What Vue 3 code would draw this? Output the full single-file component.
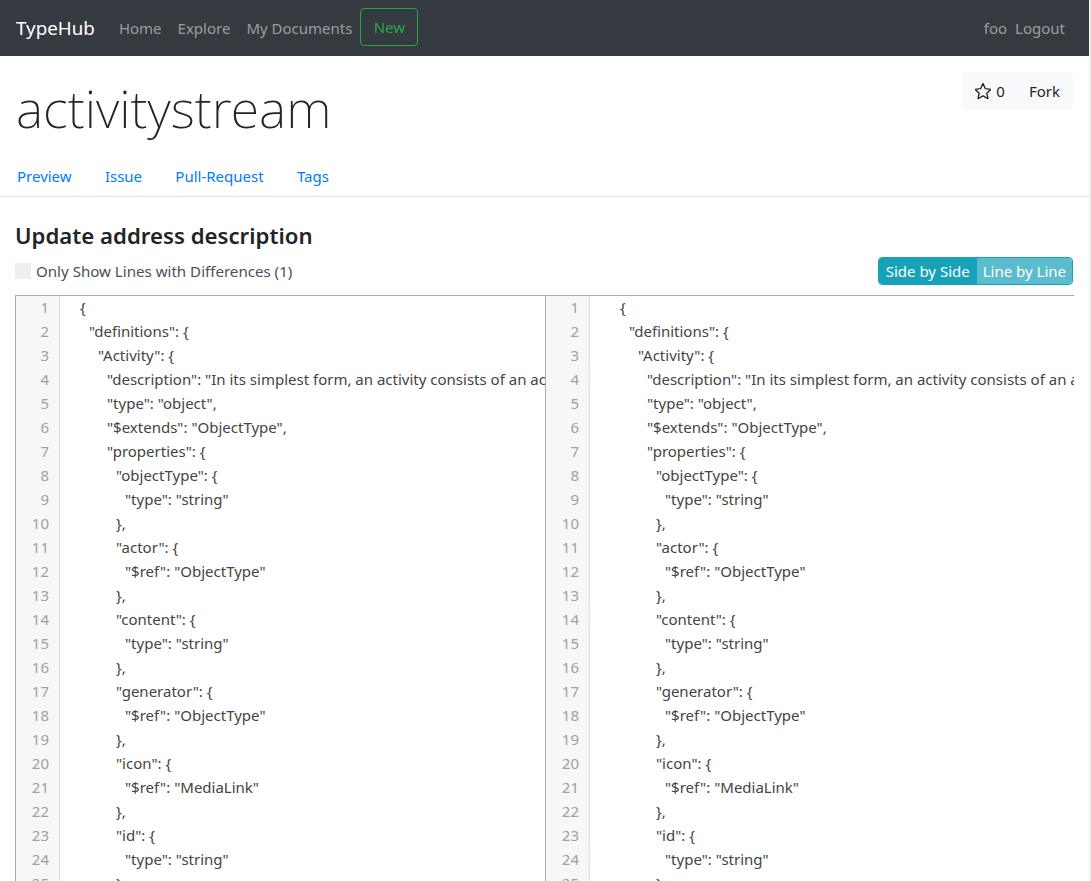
<template>
  <div class="page">
    <nav class="navbar">
      <a class="brand">TypeHub</a>
      <div class="nav-links">
        <a v-for="item in navItems" :key="item" class="nav-link">{{ item }}</a>
      </div>
      <button class="btn-new">New</button>
      <div class="nav-user">
        <a class="nav-link">foo</a>
        <a class="nav-link">Logout</a>
      </div>
    </nav>

    <header class="repo-head">
      <h1 class="repo-title">activitystream</h1>
      <div class="repo-actions">
        <button class="btn-light">
          <svg class="star" viewBox="2.4 2 19.2 19.2" width="16" height="16">
            <path d="M12 2.6l2.9 6.2 6.7.8-5 4.6 1.4 6.7-6-3.4-6 3.4 1.4-6.7-5-4.6 6.7-.8z" />
          </svg>
          <span>0</span>
        </button>
        <button class="btn-light">Fork</button>
      </div>
    </header>

    <ul class="tabs">
      <li v-for="tab in tabs" :key="tab"><a>{{ tab }}</a></li>
    </ul>

    <main class="content">
      <h2 class="pr-title">Update address description</h2>
      <div class="toolbar">
        <label class="only-diff">
          <span class="check"></span>
          Only Show Lines with Differences (1)
        </label>
        <div class="view-switch">
          <button class="active">Side by Side</button>
          <button>Line by Line</button>
        </div>
      </div>

      <div class="diff">
        <div v-for="side in sides" :key="side.name" class="pane" :class="side.name">
          <div v-for="(line, i) in lines" :key="i" class="row">
            <span class="num">{{ i + 1 }}</span>
            <span class="code" :style="{ paddingLeft: side.start + line.depth * 9 + 'px' }">{{ line.text }}</span>
          </div>
        </div>
      </div>
    </main>
  </div>
</template>

<script setup>
const navItems = ['Home', 'Explore', 'My Documents']
const tabs = ['Preview', 'Issue', 'Pull-Request', 'Tags']

// отступ до текста у правой панели больше
const sides = [
  { name: 'left', start: 20 },
  { name: 'right', start: 30 }
]

const lines = [
  { depth: 0, text: '{' },
  { depth: 1, text: '"definitions": {' },
  { depth: 2, text: '"Activity": {' },
  { depth: 3, text: '"description": "In its simplest form, an activity consists of an actor, a verb, an object, and a target."' },
  { depth: 3, text: '"type": "object",' },
  { depth: 3, text: '"$extends": "ObjectType",' },
  { depth: 3, text: '"properties": {' },
  { depth: 4, text: '"objectType": {' },
  { depth: 5, text: '"type": "string"' },
  { depth: 4, text: '},' },
  { depth: 4, text: '"actor": {' },
  { depth: 5, text: '"$ref": "ObjectType"' },
  { depth: 4, text: '},' },
  { depth: 4, text: '"content": {' },
  { depth: 5, text: '"type": "string"' },
  { depth: 4, text: '},' },
  { depth: 4, text: '"generator": {' },
  { depth: 5, text: '"$ref": "ObjectType"' },
  { depth: 4, text: '},' },
  { depth: 4, text: '"icon": {' },
  { depth: 5, text: '"$ref": "MediaLink"' },
  { depth: 4, text: '},' },
  { depth: 4, text: '"id": {' },
  { depth: 5, text: '"type": "string"' },
  { depth: 4, text: '},' }
]
</script>

<style>
html, body {
  margin: 0;
  height: 881px;
  overflow: hidden;
  background: #f1f1f1;
}
</style>

<style scoped>
.page {
  width: 1089px;
  height: 881px;
  overflow: hidden;
  background: #fff;
  color: #212529;
  font-family: "Noto Sans", "Open Sans", sans-serif;
  font-size: 15px;
  line-height: 24px;
}

/* Navbar */
.navbar {
  display: flex;
  align-items: center;
  height: 56px;
  box-sizing: border-box;
  padding: 0 16px;
  background: #343a40;
}

.brand {
  margin-right: 16px;
  color: #fff;
  font-size: 18.8px;
  line-height: 30px;
}

.nav-links {
  display: flex;
}

.nav-link {
  padding: 0 8px;
  color: rgba(255, 255, 255, 0.5);
}

.btn-new {
  width: 58px;
  height: 38px;
  margin-bottom: 2px;
  padding: 0;
  border: 1px solid #28a745;
  border-radius: 4px;
  background: transparent;
  color: #28a745;
  font: inherit;
}

.nav-user {
  display: flex;
  margin-left: auto;
}

.nav-user .nav-link {
  padding: 0 0 0 8px;
}

.nav-user .nav-link:last-child {
  padding-right: 8px;
}

/* Repo head */
.repo-head {
  display: flex;
  justify-content: space-between;
  align-items: flex-start;
  height: 100px;
  padding: 0 16px;
}

.repo-title {
  margin: 14px 0 0;
  font-size: 52px;
  font-weight: 200;
  line-height: 76px;
}

.repo-actions {
  display: flex;
  margin-top: 16px;
  border-radius: 4px;
  background: #f8f9fa;
}

.btn-light {
  display: flex;
  align-items: center;
  gap: 5px;
  height: 38px;
  padding: 0 13px;
  border: 0;
  background: transparent;
  color: #212529;
  font: inherit;
}

.btn-light + .btn-light {
  padding-left: 11px;
}

.star {
  fill: none;
  stroke: #212529;
  stroke-width: 1.6;
  stroke-linejoin: round;
}

/* Tabs */
.tabs {
  display: flex;
  gap: 33.3px;
  height: 41px;
  margin: 0;
  padding: 8px 17px 0;
  box-sizing: border-box;
  border-bottom: 1px solid #dee2e6;
  list-style: none;
}

.tabs a {
  color: #007bff;
}

/* Content */
.content {
  padding: 0 15px;
}

.pr-title {
  margin: 23px 0 0;
  font-size: 22.2px;
  font-weight: 600;
  line-height: 32px;
}

.toolbar {
  display: flex;
  justify-content: space-between;
  align-items: center;
  height: 28px;
  margin-top: 5px;
}

.only-diff {
  display: flex;
  align-items: center;
  color: #495057;
  font-size: 15.1px;
}

.check {
  width: 16px;
  height: 16px;
  margin-right: 5px;
  background: #eee;
}

.view-switch {
  display: flex;
  box-sizing: border-box;
  height: 28px;
  margin-right: 1px;
  border: 1px solid #17a2b8;
  border-radius: 4px;
  overflow: hidden;
}

.view-switch button {
  padding: 0 6px;
  border: 0;
  background: #5bbccd;
  color: #fff;
  font: inherit;
}

.view-switch button.active {
  padding: 0 7px;
  background: #17a2b8;
}

/* Diff */
.diff {
  display: flex;
  width: 1059px;
  margin-top: 10px;
  border-top: 1px solid #aaa;
}

.pane {
  min-width: 0;
  overflow: hidden;
}

.pane.left {
  width: 531px;
  box-sizing: border-box;
  border-left: 1px solid #aaa;
  border-right: 1px solid #aaa;
}

.pane.right {
  flex: 1;
}

.row {
  display: flex;
  height: 24px;
  line-height: 23px;
  white-space: nowrap;
}

.num {
  flex: none;
  width: 44px;
  padding-right: 10px;
  box-sizing: border-box;
  border-right: 1px solid #ddd;
  background: #f7f7f7;
  color: #a0a0a0;
  text-align: right;
}

.code {
  color: #444;
}
</style>
